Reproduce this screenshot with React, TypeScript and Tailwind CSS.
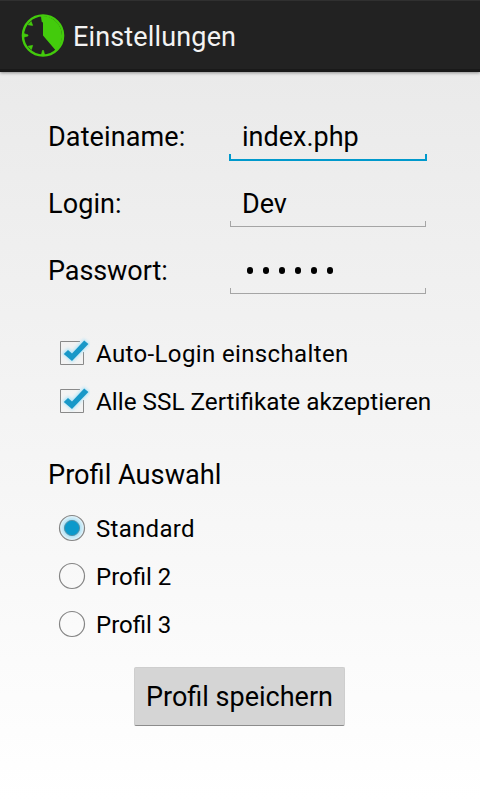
import type { ReactNode } from "react";

function ClockIcon() {
  return (
    <svg width="44" height="44" viewBox="0 0 44 44" className="mt-[2px] shrink-0">
      <circle cx="22" cy="21.5" r="20.1" fill="none" stroke="#43cb0c" strokeWidth="2.4" />
      <path d="M22 2V21.5L34.8 36.5A20 20 0 0 0 22 2Z" fill="#43cb0c" />
      <path d="M20.2 2H22V8H21.2ZM7.2 10.8L10.2 7.6L11.6 11.4ZM2.5 19.6L7 20.9V21.9L2.5 23.2ZM7.2 32.2L11.6 31.4L10.4 35.4ZM20.4 41L21.5 36.5H22.5L23.6 41Z" fill="#43cb0c" stroke="#43cb0c" strokeWidth="0.7" />
    </svg>
  );
}

function Field({ label, focused, type = "", children }: { label: string; focused?: boolean; type?: string; children: ReactNode }) {
  return (
    <div className="flex h-[67px] text-[27px] leading-[66px]">
      <span className={"w-[181px] " + type}>{label}</span>
      <div className="relative w-[198px] pl-[13px]">
        {children}
        <div
          className={
            focused
              ? "absolute bottom-[10px] left-0 h-[7px] w-[198px] border-x-2 border-b-2 border-[#0099cc]"
              : "absolute bottom-[11px] left-px h-[6px] w-[196px] border-x border-b border-[#a5a5a5]"
          }
        />
      </div>
    </div>
  );
}

function Check({ label, type }: { label: string; type: string }) {
  return (
    <label className="flex h-12 items-center">
      <svg width="36" height="36" viewBox="0 0 36 36" className="mr-[6px] shrink-0">
        <defs>
          <filter id="glow" x="-40%" y="-40%" width="180%" height="180%">
            <feGaussianBlur stdDeviation="1.7" />
          </filter>
        </defs>
        <path d="M26 6.5H6.5V29.5H29.5V17" fill="none" stroke="#898989" />
        <path d="M10 18.5L14 15L18 18.5L30 5.7L34 9L18 25.5Z" fill="#a5e2f9" stroke="#a5e2f9" strokeWidth="3" opacity=".8" filter="url(#glow)" />
        <path d="M9.8 18.9L14 14.9L18 18.6L30.2 5.5L34.4 9.1L18 26Z" fill="#1898c8" />
      </svg>
      <span className={"pt-[2px] leading-[48px] whitespace-nowrap " + type}>{label}</span>
    </label>
  );
}

function Radio({ label, selected, type }: { label: string; selected?: boolean; type: string }) {
  return (
    <label className="flex h-12 items-center">
      <svg width="36" height="36" viewBox="0 0 36 36" className="mr-[6px] shrink-0">
        <defs>
          <radialGradient id="halo">
            <stop offset="60%" stopColor="#a9dff4" />
            <stop offset="100%" stopColor="#eaf6fb" />
          </radialGradient>
        </defs>
        <circle cx="18" cy="18" r="12.5" fill={selected ? "url(#halo)" : "none"} stroke="#858585" strokeWidth="1.2" />
        {selected && <circle cx="18" cy="18" r="7.6" fill="#0c99cb" stroke="#5794aa" />}
      </svg>
      <span className={"pt-[2px] leading-[48px] " + type}>{label}</span>
    </label>
  );
}

export default function App() {
  return (
    <div className="flex h-[800px] w-[480px] flex-col overflow-hidden bg-linear-to-b from-[#e8e8e8] to-white font-[Roboto,sans-serif] text-black">
      <header className="z-10 flex h-[72px] shrink-0 items-center border-t border-b-[3px] border-t-[#303030] border-b-[#191919] bg-[#222222] pl-[21px] text-[27px] text-[#f3f3f3] shadow-[0_1px_3px_rgba(0,0,0,0.4)]">
        <ClockIcon />
        <span className="ml-[8px] pt-[4px] tracking-[0.15px]">Einstellungen</span>
      </header>
      <main className="flex flex-col pt-[32px] pl-12">
        <Field label="Dateiname:" focused type="tracking-[0.12px]">index.php</Field>
        <Field label="Login:" type="tracking-[0.1px]">Dev</Field>
        <Field label="Passwort:" type="tracking-[-0.08px]">
          <span className="flex h-[64px] items-center gap-[10px] pl-[5px]">
            {Array.from({ length: 6 }, (_, i) => (
              <i key={i} className="block h-[7px] w-[6px] rounded-full bg-black" />
            ))}
          </span>
        </Field>
        <section className="mt-6 pl-[6px]">
          <Check label="Auto-Login einschalten" type="text-[24px] tracking-[0.37px]" />
          <Check label="Alle SSL Zertifikate akzeptieren" type="text-[24.3px]" />
        </section>
        <h2 className="mt-[31px] h-12 text-[27.2px] leading-[38px]">Profil Auswahl</h2>
        <section className="pl-[6px]">
          <Radio label="Standard" selected type="text-[24px] tracking-[0.3px]" />
          <Radio label="Profil 2" type="text-[24px]" />
          <Radio label="Profil 3" type="text-[24px]" />
        </section>
        <button className="mt-[19px] ml-[86px] h-[59px] w-[211px] rounded-[2px] border border-[#cecece] border-b-[#8c8c8c] bg-[#d5d5d5] pt-[2px] text-[27px] whitespace-nowrap">
          Profil speichern
        </button>
      </main>
    </div>
  );
}
